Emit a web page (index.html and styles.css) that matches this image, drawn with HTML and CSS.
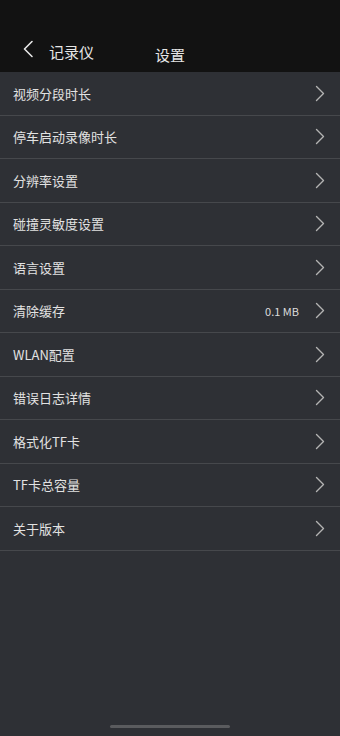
FILE: index.html
```html
<!DOCTYPE html>
<html lang="zh-CN">
<head>
    <meta charset="UTF-8">
    <meta name="viewport" content="width=device-width, initial-scale=1.0">
    <title>设置</title>
    <link rel="stylesheet" href="styles.css">
</head>
<body>
    <div class="page">
        <div class="header">
            <div class="nav">
                <a class="back" href="#">
                    <svg width="12" height="18" viewBox="0 0 12 18"><path d="M10 1.5 L2.5 9 L10 16.5" fill="none" stroke="#e6e6e6" stroke-width="1.6" stroke-linecap="round" stroke-linejoin="round"/></svg>
                    <span>记录仪</span>
                </a>
                <h1>设置</h1>
            </div>
        </div>

        <ul class="list">
            <li class="item"><span class="label">视频分段时长</span><svg class="arrow" viewBox="0 0 10 17"><path d="M1.5 1.5 L8.5 8.5 L1.5 15.5"/></svg></li>
            <li class="item"><span class="label">停车启动录像时长</span><svg class="arrow" viewBox="0 0 10 17"><path d="M1.5 1.5 L8.5 8.5 L1.5 15.5"/></svg></li>
            <li class="item"><span class="label">分辨率设置</span><svg class="arrow" viewBox="0 0 10 17"><path d="M1.5 1.5 L8.5 8.5 L1.5 15.5"/></svg></li>
            <li class="item"><span class="label">碰撞灵敏度设置</span><svg class="arrow" viewBox="0 0 10 17"><path d="M1.5 1.5 L8.5 8.5 L1.5 15.5"/></svg></li>
            <li class="item"><span class="label">语言设置</span><svg class="arrow" viewBox="0 0 10 17"><path d="M1.5 1.5 L8.5 8.5 L1.5 15.5"/></svg></li>
            <li class="item"><span class="label">清除缓存</span><span class="value">0.1 MB</span><svg class="arrow" viewBox="0 0 10 17"><path d="M1.5 1.5 L8.5 8.5 L1.5 15.5"/></svg></li>
            <li class="item"><span class="label">WLAN配置</span><svg class="arrow" viewBox="0 0 10 17"><path d="M1.5 1.5 L8.5 8.5 L1.5 15.5"/></svg></li>
            <li class="item"><span class="label">错误日志详情</span><svg class="arrow" viewBox="0 0 10 17"><path d="M1.5 1.5 L8.5 8.5 L1.5 15.5"/></svg></li>
            <li class="item"><span class="label">格式化TF卡</span><svg class="arrow" viewBox="0 0 10 17"><path d="M1.5 1.5 L8.5 8.5 L1.5 15.5"/></svg></li>
            <li class="item"><span class="label">TF卡总容量</span><svg class="arrow" viewBox="0 0 10 17"><path d="M1.5 1.5 L8.5 8.5 L1.5 15.5"/></svg></li>
            <li class="item"><span class="label">关于版本</span><svg class="arrow" viewBox="0 0 10 17"><path d="M1.5 1.5 L8.5 8.5 L1.5 15.5"/></svg></li>
        </ul>

        <div class="home-bar"></div>
    </div>
</body>
</html>
```

FILE: styles.css
```css
* {
    margin: 0;
    padding: 0;
    box-sizing: border-box;
}

body {
    font-family: "Noto Sans CJK SC", "Noto Sans", sans-serif;
    background: #2e3035;
    color: #e2e2e2;
}

.page {
    position: relative;
    min-height: 736px;
}

.header {
    background: #121212;
    height: 72px;
    padding-top: 38px;
}

.nav {
    position: relative;
    height: 26px;
    display: flex;
    align-items: center;
    justify-content: center;
}

.back {
    position: absolute;
    left: 22px;
    top: 3px;
    display: flex;
    align-items: center;
    gap: 15px;
    color: #e6e6e6;
    text-decoration: none;
    font-size: 15px;
}

.back svg {
    margin-top: -6px;
}

.nav h1 {
    font-size: 15px;
    font-weight: 400;
    color: #e6e6e6;
    margin-top: 6px;
}

.list {
    list-style: none;
}

.item {
    display: flex;
    align-items: center;
    height: 43.5px;
    padding: 0 15px 0 13px;
    border-bottom: 1.5px solid #46484c;
    font-size: 13px;
}

.label {
    flex: 1;
}

.value {
    font-size: 11px;
    margin-right: 16px;
    color: #dcdcdc;
}

.arrow {
    width: 10px;
    height: 17px;
    fill: none;
    stroke: #b3b3b3;
    stroke-width: 1.4;
    stroke-linecap: round;
    stroke-linejoin: round;
}

.home-bar {
    position: absolute;
    left: 110px;
    bottom: 8px;
    width: 120px;
    height: 3px;
    border-radius: 2px;
    background: #5a5b5e;
}
```
